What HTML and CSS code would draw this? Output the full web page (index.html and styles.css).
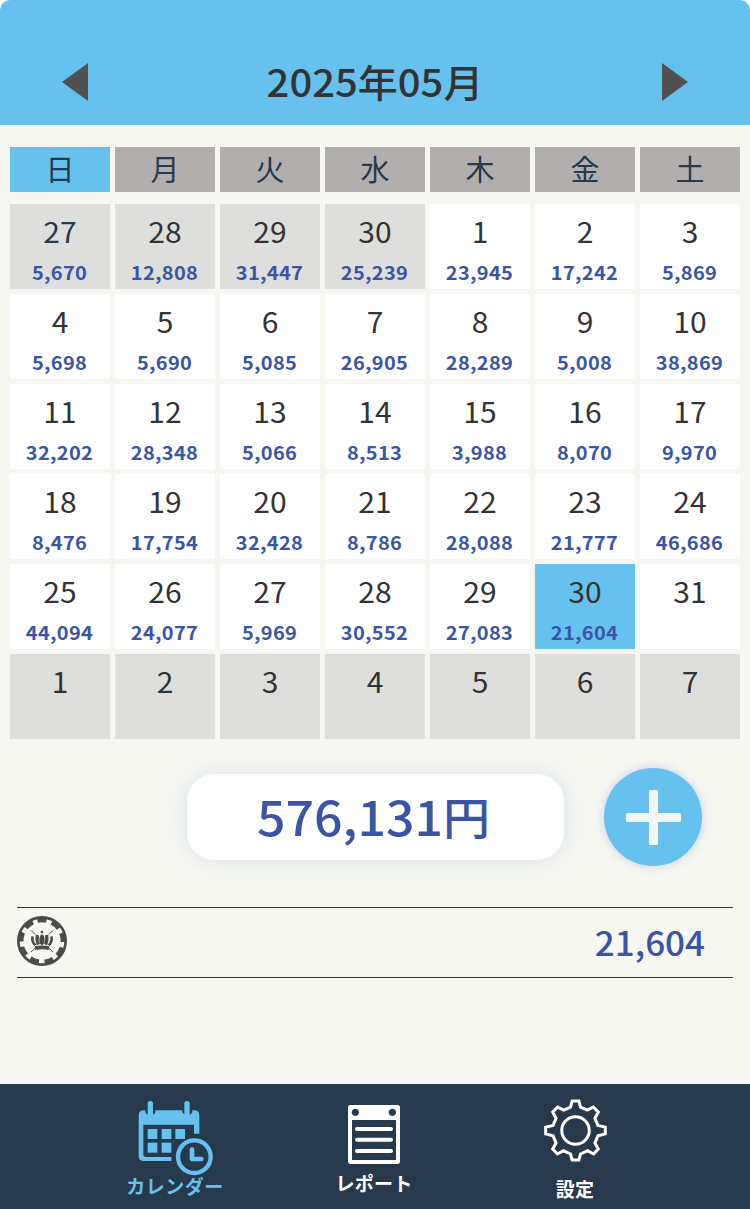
FILE: index.html
```html
<!DOCTYPE html>
<html lang="ja">
<head>
  <meta charset="UTF-8">
  <meta name="viewport" content="width=device-width, initial-scale=1.0">
  <title>カレンダー</title>
  <link rel="stylesheet" href="styles.css">
</head>
<body>
<div class="app">

  <!-- HEADER -->
  <header class="header">
    <svg class="arrow" viewBox="0 0 26 38"><path d="M26 0V38L0 19Z"/></svg>
    <h1 class="month">2025年05月</h1>
    <svg class="arrow" viewBox="0 0 26 38"><path d="M0 0V38L26 19Z"/></svg>
  </header>

  <main class="main">
    <!-- Weekdays -->
    <div class="weekdays">
      <div class="weekday active">日</div>
      <div class="weekday">月</div>
      <div class="weekday">火</div>
      <div class="weekday">水</div>
      <div class="weekday">木</div>
      <div class="weekday">金</div>
      <div class="weekday">土</div>
    </div>

    <!-- Days -->
    <div class="days">
      <div class="day other first"><span class="date">27</span><span class="amount">5,670</span></div>
      <div class="day other"><span class="date">28</span><span class="amount">12,808</span></div>
      <div class="day other"><span class="date">29</span><span class="amount">31,447</span></div>
      <div class="day other"><span class="date">30</span><span class="amount">25,239</span></div>
      <div class="day"><span class="date">1</span><span class="amount">23,945</span></div>
      <div class="day"><span class="date">2</span><span class="amount">17,242</span></div>
      <div class="day"><span class="date">3</span><span class="amount">5,869</span></div>

      <div class="day"><span class="date">4</span><span class="amount">5,698</span></div>
      <div class="day"><span class="date">5</span><span class="amount">5,690</span></div>
      <div class="day"><span class="date">6</span><span class="amount">5,085</span></div>
      <div class="day"><span class="date">7</span><span class="amount">26,905</span></div>
      <div class="day"><span class="date">8</span><span class="amount">28,289</span></div>
      <div class="day"><span class="date">9</span><span class="amount">5,008</span></div>
      <div class="day"><span class="date">10</span><span class="amount">38,869</span></div>

      <div class="day"><span class="date">11</span><span class="amount">32,202</span></div>
      <div class="day"><span class="date">12</span><span class="amount">28,348</span></div>
      <div class="day"><span class="date">13</span><span class="amount">5,066</span></div>
      <div class="day"><span class="date">14</span><span class="amount">8,513</span></div>
      <div class="day"><span class="date">15</span><span class="amount">3,988</span></div>
      <div class="day"><span class="date">16</span><span class="amount">8,070</span></div>
      <div class="day"><span class="date">17</span><span class="amount">9,970</span></div>

      <div class="day"><span class="date">18</span><span class="amount">8,476</span></div>
      <div class="day"><span class="date">19</span><span class="amount">17,754</span></div>
      <div class="day"><span class="date">20</span><span class="amount">32,428</span></div>
      <div class="day"><span class="date">21</span><span class="amount">8,786</span></div>
      <div class="day"><span class="date">22</span><span class="amount">28,088</span></div>
      <div class="day"><span class="date">23</span><span class="amount">21,777</span></div>
      <div class="day"><span class="date">24</span><span class="amount">46,686</span></div>

      <div class="day"><span class="date">25</span><span class="amount">44,094</span></div>
      <div class="day"><span class="date">26</span><span class="amount">24,077</span></div>
      <div class="day"><span class="date">27</span><span class="amount">5,969</span></div>
      <div class="day"><span class="date">28</span><span class="amount">30,552</span></div>
      <div class="day"><span class="date">29</span><span class="amount">27,083</span></div>
      <div class="day selected"><span class="date">30</span><span class="amount">21,604</span></div>
      <div class="day"><span class="date">31</span></div>

      <div class="day other"><span class="date">1</span></div>
      <div class="day other"><span class="date">2</span></div>
      <div class="day other"><span class="date">3</span></div>
      <div class="day other"><span class="date">4</span></div>
      <div class="day other"><span class="date">5</span></div>
      <div class="day other"><span class="date">6</span></div>
      <div class="day other"><span class="date">7</span></div>
    </div>

    <!-- Monthly total -->
    <div class="summary">
      <div class="total"><span class="total-value">576,131<span class="yen">円</span></span></div>
      <div class="add">
        <svg class="plus" viewBox="0 0 55 55">
          <rect x="23" y="0" width="9" height="55" rx="1.5"/>
          <rect x="0" y="23" width="55" height="9" rx="1.5"/>
        </svg>
      </div>
    </div>

    <!-- Entries of the selected day -->
    <div class="entry">
      <svg class="chip" viewBox="0 0 150 150">
        <circle class="chip-line" cx="75" cy="75" r="71" stroke-width="8"/>
        <circle class="chip-line" cx="75" cy="75" r="63" stroke-width="14" pathLength="360" stroke-dasharray="25 15" transform="rotate(-102.5 75 75)"/>
        <path class="chip-line" stroke-width="3" d="M42 43L54 55M108 43L96 55M42 108L54 97M108 108L96 97"/>
        <circle cx="75" cy="48" r="4"/>
        <ellipse cx="75" cy="71" rx="8" ry="16"/>
        <path class="chip-line" stroke-width="10" d="M61 57Q58 72 64 86M89 57Q92 72 86 86"/>
        <path class="chip-line" stroke-width="8" d="M47 61Q43 76 55 88M103 61Q107 76 95 88"/>
        <path d="M53 91Q75 86 97 91L95 102Q75 97 55 102Z"/>
      </svg>
      <span class="entry-amount">21,604</span>
    </div>
  </main>

  <!-- BOTTOM NAV -->
  <nav class="nav">
    <a class="nav-item nav-calendar">
      <svg class="icon-calendar" viewBox="0 0 225 225">
        <path d="M17 28H22V34A17 17 0 0 0 52 34V28H133V34A17 17 0 0 0 163 34V28H168Q184 28 184 44V98H168V71H16V160Q16 168 24 168H100V180H17Q2 180 2 165V44Q2 28 17 28Z"/>
        <rect x="29" y="0" width="16" height="47" rx="7"/>
        <rect x="139" y="0" width="16" height="47" rx="7"/>
        <rect x="29" y="84" width="29" height="30"/>
        <rect x="71" y="84" width="29" height="30"/>
        <rect x="112" y="84" width="29" height="30"/>
        <rect x="29" y="125" width="29" height="30"/>
        <rect x="71" y="125" width="29" height="30"/>
        <circle class="line" cx="169" cy="167" r="49" stroke-width="13"/>
        <path class="line" d="M162 146V174H190" stroke-width="14" stroke-linecap="round" stroke-linejoin="round"/>
      </svg>
      <span class="nav-label">カレンダー</span>
    </a>
    <a class="nav-item nav-report">
      <svg class="icon-report" viewBox="0 0 156 177">
        <path fill-rule="evenodd" d="M8 0H148Q156 0 156 8V169Q156 177 148 177H8Q0 177 0 169V8Q0 0 8 0ZM12 45V165H144V45ZM22 11A11 11 0 1 0 22.1 11ZM133 11A11 11 0 1 0 133.1 11Z"/>
        <path class="line" d="M27 72H129M27 104H129M27 138H129" stroke-width="12" stroke-linecap="round"/>
      </svg>
      <span class="nav-label">レポート</span>
    </a>
    <a class="nav-item nav-setting">
      <svg class="icon-setting" viewBox="56 43 188 188">
        <path class="line" stroke-width="9" d="M140 49H160L165 67L185 76L203 67L218 82L208 101L217 122L239 127V147L217 153L208 174L218 192L204 207L186 197L165 207L160 225H140L135 207L114 197L96 207L82 192L92 174L83 153L61 147V127L83 122L92 101L82 82L97 67L115 76L135 67Z"/>
        <circle class="line" cx="150" cy="137" r="41" stroke-width="9"/>
      </svg>
      <span class="nav-label">設定</span>
    </a>
  </nav>

</div>
</body>
</html>
```
FILE: styles.css
```css
* {
  box-sizing: border-box;
}

body {
  margin: 0;
  background: #fff;
  color: #333;
  font-family: "Noto Sans CJK JP", sans-serif;
}

.app {
  display: flex;
  flex-direction: column;
  width: 750px;
  height: 1209px;
  background: #f6f7f1;
  border-radius: 10px 10px 0 0;
  overflow: hidden;
}

/* Header */
.header {
  display: flex;
  align-items: center;
  justify-content: space-between;
  height: 125px;
  padding: 39px 62px 0;
  background: #67c1ef;
}

.arrow {
  width: 26px;
  height: 38px;
  fill: #505050;
}

.month {
  margin: 0 0 3px;
  font-size: 40px;
  font-weight: 500;
  line-height: 58px;
}

/* slightly flattened lettering */
.month,
.date,
.amount,
.total-value,
.entry-amount {
  transform: scaleY(0.95);
}

.main {
  flex: 1;
  padding-top: 22px;
}

/* Calendar */
.weekdays,
.days {
  display: grid;
  grid-template-columns: repeat(7, 100px);
  gap: 5px;
  padding: 0 10px;
}

.weekday {
  height: 45px;
  background: #b2aeae;
  color: #27394d;
  font-size: 29px;
  line-height: 42px;
  text-align: center;
}

.weekday.active {
  background: #67c1ef;
}

.days {
  margin-top: 12px;
}

.day {
  display: flex;
  flex-direction: column;
  height: 85px;
  background: #fff;
  text-align: center;
}

.day.other {
  background: #dededd;
}

.day.selected {
  background: #67c1ef;
}

.date {
  font-size: 30px;
  line-height: 55px;
}

.first .date {
  color: #27394d;
}

.amount {
  margin-top: -2px;
  padding-right: 1px;
  color: #3956a6;
  font-size: 20px;
  font-weight: 700;
  letter-spacing: 0.3px;
  line-height: 30px;
}

/* Monthly total */
.summary {
  display: flex;
  align-items: center;
  gap: 40px;
  margin: 29px 0 0 187px;
}

.total {
  width: 377px;
  height: 86px;
  padding-right: 4px;
  border-radius: 27px;
  background: #fff;
  box-shadow: 0 0 20px rgba(103, 150, 220, 0.2);
  color: #3956a6;
  font-size: 50px;
  font-weight: 500;
  line-height: 83px;
  text-align: center;
}

.total-value {
  display: block;
}

.yen {
  font-size: 47px;
  line-height: 1;
  vertical-align: 1px;
}

.add {
  display: flex;
  align-items: center;
  justify-content: center;
  width: 98px;
  height: 98px;
  border-radius: 50%;
  background: #67c1ef;
  box-shadow: 0 0 10px rgba(110, 130, 230, 0.35);
}

.plus {
  width: 55px;
  height: 55px;
  fill: #f6f7f1;
}

/* Entry */
.entry {
  display: flex;
  align-items: center;
  justify-content: space-between;
  height: 71px;
  margin: 41px 17px 0;
  padding-right: 28px;
  border-top: 1px solid #27394d;
  border-bottom: 1px solid #27394d;
}

.chip {
  width: 50px;
  height: 50px;
  margin-bottom: 3px;
  fill: #4b4b4b;
}

.chip-line {
  fill: none;
  stroke: #4b4b4b;
}

.entry-amount {
  margin-bottom: 1px;
  color: #3956a6;
  font-size: 35px;
  font-weight: 500;
  line-height: 50px;
}

/* Bottom nav */
.nav {
  display: flex;
  height: 125px;
  padding-left: 115px;
  background: #27394d;
}

.nav-item {
  display: flex;
  flex-direction: column;
  align-items: center;
  color: #fff;
  fill: currentColor;
}

.nav-calendar {
  width: 120px;
  padding-top: 17px;
  color: #67c1ef;
}

.nav-report {
  width: 120px;
  margin-left: 79px;
  padding-top: 21px;
}

.nav-setting {
  width: 120px;
  margin-left: 81px;
  padding-top: 15px;
}

.line {
  fill: none;
  stroke: currentColor;
}

.icon-calendar {
  width: 75px;
  height: 75px;
}

.icon-report {
  width: 52px;
  height: 59px;
}

.icon-setting {
  width: 63px;
  height: 63px;
}

.nav-label {
  font-size: 19px;
  font-weight: 700;
  letter-spacing: 0.3px;
  line-height: 30px;
}

.nav-calendar .nav-label {
  margin-top: -5px;
  letter-spacing: 0.5px;
}

.nav-report .nav-label {
  margin-top: 4px;
}

.nav-setting .nav-label {
  margin-top: 12px;
}
```
